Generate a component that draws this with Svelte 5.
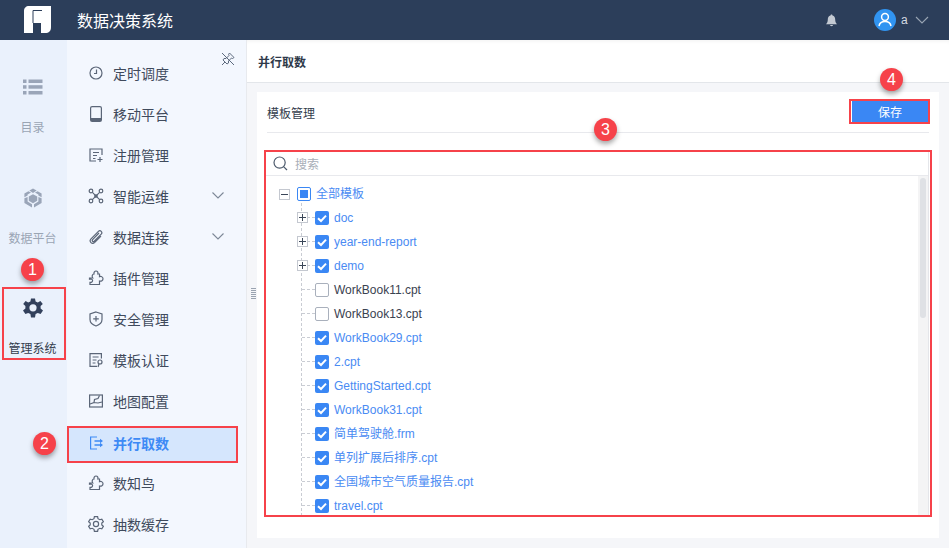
<script>
  const navItems = [
    { label: '定时调度', icon: 'clock' },
    { label: '移动平台', icon: 'tablet' },
    { label: '注册管理', icon: 'register' },
    { label: '智能运维', icon: 'network', arrow: true },
    { label: '数据连接', icon: 'clip', arrow: true },
    { label: '插件管理', icon: 'puzzle' },
    { label: '安全管理', icon: 'shield' },
    { label: '模板认证', icon: 'cert' },
    { label: '地图配置', icon: 'map' },
    { label: '并行取数', icon: 'parallel', active: true },
    { label: '数知鸟', icon: 'puzzle' },
    { label: '抽数缓存', icon: 'cog' }
  ]

  const tree = [
    { name: 'doc', checked: true, folder: true },
    { name: 'year-end-report', checked: true, folder: true },
    { name: 'demo', checked: true, folder: true },
    { name: 'WorkBook11.cpt', checked: false },
    { name: 'WorkBook13.cpt', checked: false },
    { name: 'WorkBook29.cpt', checked: true },
    { name: '2.cpt', checked: true },
    { name: 'GettingStarted.cpt', checked: true },
    { name: 'WorkBook31.cpt', checked: true },
    { name: '简单驾驶舱.frm', checked: true },
    { name: '单列扩展后排序.cpt', checked: true },
    { name: '全国城市空气质量报告.cpt', checked: true },
    { name: 'travel.cpt', checked: true }
  ]

  const badges = [
    { n: 1, cls: 'b1' },
    { n: 2, cls: 'b2' },
    { n: 3, cls: 'b3' },
    { n: 4, cls: 'b4' }
  ]
</script>

{#snippet navIcon(name)}
  <svg class="nav-icon" width="16" height="16" viewBox="0 0 16 16" fill="none" stroke="currentColor" stroke-width="1.2">
    {#if name === 'clock'}
      <circle cx="8" cy="8" r="6" />
      <path d="M8.5 4.5V8.5H6" />
    {:else if name === 'tablet'}
      <rect x="2.6" y="0.6" width="10.8" height="14.8" rx="1.5" />
      <path d="M3 12H13V15H3Z" fill="currentColor" stroke="none" />
    {:else if name === 'register'}
      <path d="M14 8V2H2V14H8" />
      <path d="M5 5.5H11M5 8.5H9M5 11.5H7.5M12 10V15M9.5 12.5H14.5" />
    {:else if name === 'network'}
      <circle cx="3" cy="3" r="1.8" />
      <circle cx="13" cy="3" r="1.8" />
      <circle cx="3" cy="13" r="1.8" />
      <circle cx="13" cy="13" r="1.8" />
      <path d="M4.4 4.4L11.6 11.6M11.6 4.4L4.4 11.6" />
      <circle cx="8" cy="8" r="1.2" fill="currentColor" />
    {:else if name === 'clip'}
      <path d="M11 4L4.6 10.6C3.6 11.8 5 13.2 6.2 12.2L13.2 5.2C15 3.2 12.4 0.6 10.4 2.4L3 9.8C0.6 12.4 4 16 6.8 13.4L13 7.2" />
    {:else if name === 'puzzle'}
      <path d="M1.5 8H4.8C3.6 6.4 4.2 4.2 6 4C5.6 2.4 6.8 1 8 1C9.4 1 10.4 2.4 9.8 4H11.5V6.6C13.4 6 15 7.2 15 8.8C15 10.4 13.4 11.6 11.5 11V14.5H2V12.4C3.6 12.6 4.6 11.6 4.6 10.6C4.6 9.4 3.2 8.8 1.5 9.2Z" />
    {:else if name === 'shield'}
      <path d="M8 1L14 3V8.5C14 11.5 11 14 8 15C5 14 2 11.5 2 8.5V3Z" />
      <path d="M8 5V10.5M5.2 7.8H10.8" />
    {:else if name === 'cert'}
      <path d="M9 14.4H2V1.6H13.4V6.5" />
      <path d="M4.6 5H10.6M4.6 8H8.5M4.6 11H7.5" />
      <circle cx="12" cy="10" r="2" />
      <path d="M11 12L10 15" />
    {:else if name === 'map'}
      <rect x="1.6" y="2" width="12.8" height="12" />
      <path d="M2 11L6 9.5L6.5 6.5L10 5.5L11.5 2.5M6 9.5L10 10L14 9" />
    {:else if name === 'parallel'}
      <path d="M9 2H2.6V14H9" />
      <path d="M6.5 6H12.5M6.5 10H12.5" stroke-width="1.6" />
      <path d="M12 3.8L15 6L12 8.2ZM12 7.8L15 10L12 12.2Z" fill="currentColor" stroke="none" />
    {:else if name === 'cog'}
      <path d="M6.4 1.2H9.6L10 3.2L11.8 4.2L13.8 3.6L15.4 6.2L13.8 7.6V9.4L15.4 10.8L13.8 13.4L11.8 12.8L10 13.8L9.6 15.8H6.4L6 13.8L4.2 12.8L2.2 13.4L0.6 10.8L2.2 9.4V7.6L0.6 6.2L2.2 3.6L4.2 4.2L6 3.2Z" transform="translate(0 -0.5)" />
      <circle cx="8" cy="8" r="2.6" />
    {/if}
  </svg>
{/snippet}

{#snippet checkbox(checked)}
  <span class="box" class:on={checked}>
    {#if checked}
      <svg width="14" height="14" viewBox="0 0 14 14" fill="none" stroke="#fff" stroke-width="2">
        <path d="M3 7.2L6 10L11 4.6" />
      </svg>
    {/if}
  </span>
{/snippet}

<div class="page">
  <header class="topbar">
    <svg class="logo" width="28" height="28" viewBox="0 0 28 28">
      <path d="M6 0H28V21C28 25 26 27 22 27H18V17H10V27H1V5C1 2 3 0 6 0Z" fill="#fff" />
      <path d="M10 17V4.5H19" fill="none" stroke="#2c3e5a" stroke-width="1" />
    </svg>
    <span class="brand">数据决策系统</span>
    <svg class="bell" width="13" height="13" viewBox="0 0 13 13">
      <path d="M6.5 0.5C7.2 0.5 7.5 1 7.5 1.5C9.5 2 10.2 3.6 10.2 5.5C10.2 7.8 10.8 9 12 10.2H1C2.2 9 2.8 7.8 2.8 5.5C2.8 3.6 3.5 2 5.5 1.5C5.5 1 5.8 0.5 6.5 0.5ZM5 11H8C7.8 12.6 5.2 12.6 5 11Z" fill="#c3c9d2" />
    </svg>
    <span class="avatar">
      <svg width="22" height="22" viewBox="0 0 22 22" fill="none" stroke="#fff" stroke-width="1.5">
        <circle cx="11" cy="8" r="3.4" />
        <path d="M5 17C5.6 13.8 8 12.6 11 12.6C14 12.6 16.4 13.8 17 17" />
      </svg>
    </span>
    <span class="user">a</span>
    <svg class="user-arrow" width="14" height="8" viewBox="0 0 14 8" fill="none" stroke="#9aa5b4" stroke-width="1.1">
      <path d="M1 1L7 7L13 1" />
    </svg>
  </header>

  <div class="body">
    <aside class="rail">
      <div class="rail-item list">
        <svg width="20" height="16" viewBox="0 0 20 16" fill="#9aa5b8">
          <rect x="0" y="0.5" width="3.5" height="3.5" />
          <rect x="5.5" y="0.5" width="14" height="3.5" />
          <rect x="0" y="6.2" width="3.5" height="3.5" />
          <rect x="5.5" y="6.2" width="14" height="3.5" />
          <rect x="0" y="12" width="3.5" height="3.5" />
          <rect x="5.5" y="12" width="14" height="3.5" />
        </svg>
        <span>目录</span>
      </div>
      <div class="rail-item data">
        <svg width="20" height="20" viewBox="0 0 20 20" fill="#9aa5b8">
          <path d="M10 6.2L14.2 8.4V12.8L10 15.2L5.8 12.8V8.4Z" />
          <path d="M10 0.5L13.6 2.6L10 5L6.4 2.6Z" />
          <path d="M14.6 3.2L18.6 5.5V9.2L15.4 7.6V6.6L12 4.6Z" />
          <path d="M5.4 3.2L1.4 5.5V9.2L4.6 7.6V6.6L8 4.6Z" />
          <path d="M1.4 10.2L4.6 8.9V13.6L9 16.2V19.4L1.4 15Z" />
          <path d="M18.6 10.2L15.4 8.9V13.6L11 16.2V19.4L18.6 15Z" />
        </svg>
        <span>数据平台</span>
      </div>
      <div class="rail-item manage">
        <svg width="20" height="20" viewBox="0 0 20 20">
          <path d="M8 0H12L12.6 3L14.8 4L17.4 2.4L19.8 5.6L17.6 7.6V9.9L20 12L17.6 15.6L14.8 14.4L12.6 15.6L12 19H8L7.4 15.6L5.2 14.4L2.4 15.6L0 12L2.4 9.9V7.6L0.2 5.6L2.6 2.4L5.2 4L7.4 3Z" fill="#33415c" transform="translate(0 0.5)" />
          <circle cx="10" cy="9.8" r="3.6" fill="#eaf1fc" />
        </svg>
        <span>管理系统</span>
      </div>
    </aside>

    <nav class="side">
      <svg class="pin" width="14" height="14" viewBox="0 0 14 14" fill="none" stroke="#5d6a7e" stroke-width="1">
        <path d="M8.5 1L13 5.5L11.5 6.5L10.5 6L7.5 9L7.5 11L6 12L2 8L3 6.5L5 6.5L8 3.5L7.6 2.4Z" />
        <path d="M1 13L4 10M1 1L13 13" />
      </svg>
      <ul class="menu">
        {#each navItems as item}
          <li class="menu-item" class:active={item.active}>
            {@render navIcon(item.icon)}
            <span>{item.label}</span>
            {#if item.arrow}
              <svg class="menu-arrow" width="12" height="7" viewBox="0 0 12 7" fill="none" stroke="#7c8797" stroke-width="1.1">
                <path d="M0.5 0.5L6 6L11.5 0.5" />
              </svg>
            {/if}
          </li>
        {/each}
      </ul>
    </nav>

    <div class="splitter">
      <span class="grip"></span>
    </div>

    <main class="main">
      <div class="title">并行取数</div>
      <div class="content">
        <section class="card">
          <div class="card-head">
            <span>模板管理</span>
            <button class="save">保存</button>
          </div>
          <div class="picker">
            <div class="search">
              <svg width="15" height="15" viewBox="0 0 15 15" fill="none" stroke="#4d5a6c" stroke-width="1.2">
                <circle cx="6.6" cy="6.6" r="5.6" />
                <path d="M10.8 10.8L14 14" />
              </svg>
              <span>搜索</span>
            </div>
            <div class="tree-wrap">
              <div class="tree">
                <div class="row root">
                  <span class="toggle"><i class="h"></i></span>
                  <span class="box half"><i></i></span>
                  <span class="name blue">全部模板</span>
                </div>
                <div class="children">
                  {#each tree as node}
                    <div class="row child">
                      <span class="twig"></span>
                      {#if node.folder}
                        <span class="toggle"><i class="h"></i><i class="v"></i></span>
                      {/if}
                      {@render checkbox(node.checked)}
                      <span class="name" class:blue={node.checked}>{node.name}</span>
                    </div>
                  {/each}
                </div>
              </div>
              <div class="scroll"><span class="thumb"></span></div>
            </div>
          </div>
        </section>
      </div>
    </main>
  </div>

  <!-- 标注框和序号 -->
  <span class="mark m1"></span>
  <span class="mark m2"></span>
  <span class="mark m3"></span>
  <span class="mark m4"></span>
  {#each badges as b}
    <span class="badge {b.cls}">{b.n}</span>
  {/each}
</div>

<style>
  :global(body) {
    margin: 0;
  }

  .page {
    position: relative;
    width: 949px;
    height: 548px;
    overflow: hidden;
    font-family: "Liberation Sans", "Noto Sans CJK SC", sans-serif;
    font-size: 12px;
    color: #333d4d;
    background: #f5f6f9;
  }

  .topbar {
    display: flex;
    align-items: center;
    height: 40px;
    background: #2c3e5a;
    color: #fff;
  }

  .logo {
    margin: 0 0 0 23px;
  }

  .brand {
    margin-left: 26px;
    font-size: 16px;
  }

  .bell {
    margin-left: 652px;
  }

  .avatar {
    display: flex;
    width: 22px;
    height: 22px;
    margin-left: 36px;
    border-radius: 50%;
    background: #3194f1;
  }

  .user {
    margin-left: 5px;
    color: #d5dae1;
  }

  .user-arrow {
    margin-left: 7px;
  }

  .body {
    display: flex;
    height: 508px;
  }

  .rail {
    display: flex;
    flex-direction: column;
    flex: none;
    width: 67px;
    background: #eaf1fc;
  }

  .rail-item {
    display: flex;
    flex-direction: column;
    align-items: center;
    padding-right: 2px;
    color: #9aa5b4;
  }

  .rail-item.list {
    padding-top: 39px;
    gap: 23px;
  }

  .rail-item.data {
    margin-top: 53px;
    gap: 21px;
  }

  .rail-item.manage {
    margin-top: 52px;
    gap: 21px;
    color: #333d4d;
  }

  .side {
    position: relative;
    flex: none;
    width: 179px;
    overflow: hidden;
    background: #f3f7fe;
  }

  .pin {
    position: absolute;
    top: 12px;
    right: 11px;
  }

  .menu {
    margin: 12px 0 0;
    padding: 0;
    list-style: none;
  }

  .menu-item {
    display: flex;
    align-items: center;
    height: 41px;
    padding: 0 22px 0 21px;
    font-size: 14px;
    color: #3f4a5c;
  }

  .menu-item.active {
    box-sizing: border-box;
    height: 36px;
    margin: 5px 8px 0 0;
    padding-bottom: 2px;
    background: #d5e6fd;
    color: #3d8af5;
    font-weight: 700;
  }

  .nav-icon {
    flex: none;
    margin-right: 9px;
    color: #5b6678;
  }

  .menu-item.active .nav-icon {
    color: #3d8af5;
  }

  .menu-arrow {
    margin-left: auto;
  }

  .splitter {
    position: relative;
    flex: none;
    width: 11px;
    background: #f5f6f9;
    border-left: 1px solid #e8eaee;
    box-sizing: border-box;
  }

  .grip {
    position: absolute;
    top: 247px;
    left: 4px;
    width: 5px;
    height: 12px;
    background: repeating-linear-gradient(0deg, #9aa3b0 0 1px, transparent 1px 2px);
  }

  .main {
    flex: 1;
    min-width: 0;
    margin-left: -10px;
    display: flex;
    flex-direction: column;
  }

  .title {
    flex: none;
    height: 43px;
    line-height: 47px;
    padding-left: 11px;
    font-weight: 700;
    color: #2f3a4a;
    background: #fff;
    border-bottom: 1px solid #e3e6ea;
    box-sizing: border-box;
    box-shadow: inset 0 4px 4px -3px rgba(0, 0, 0, 0.06);
    position: relative;
  }

  .content {
    flex: 1;
    padding: 9px 10px 10px;
    min-height: 0;
  }

  .card {
    height: 100%;
    box-sizing: border-box;
    padding: 0 10px;
    background: #fff;
  }

  .card-head {
    display: flex;
    align-items: center;
    justify-content: space-between;
    height: 40px;
    border-bottom: 1px solid #e8e9ed;
  }

  .save {
    width: 76px;
    height: 21px;
    margin: 0 1px 1px 0;
    padding: 0;
    border: none;
    background: #3a87f4;
    color: #fff;
    font: inherit;
  }

  .picker {
    margin: 19px 0 0 -1px;
    height: 363px;
    overflow: hidden;
    border-right: 1px solid #e4e6ea;
  }

  .search {
    display: flex;
    align-items: center;
    gap: 7px;
    height: 23px;
    padding-left: 7px;
    color: #a8aeb8;
    border-bottom: 1px solid #e8e9ed;
  }

  .tree-wrap {
    position: relative;
    display: flex;
    height: 339px;
  }

  .tree {
    flex: 1;
    padding: 6px 0 0 13px;
  }

  .row {
    display: flex;
    align-items: center;
    height: 24px;
    line-height: 24px;
  }

  .toggle {
    position: relative;
    flex: none;
    width: 9px;
    height: 9px;
    border: 1px solid #c4c8d0;
    background: #fff;
  }

  .toggle i {
    position: absolute;
    background: #3a4658;
  }

  .toggle .h {
    left: 1px;
    top: 4px;
    width: 7px;
    height: 1px;
  }

  .toggle .v {
    left: 4px;
    top: 1px;
    width: 1px;
    height: 7px;
  }

  .box {
    display: block;
    flex: none;
    position: relative;
    width: 14px;
    height: 14px;
    border-radius: 2px;
    box-sizing: border-box;
    border: 1px solid #a9b0bc;
    background: #fff;
  }

  .box.on {
    border: none;
    background: #3a87f4;
  }

  .box svg {
    display: block;
  }

  .box.half {
    border-color: #3a87f4;
  }

  .box.half i {
    position: absolute;
    left: 2px;
    top: 2px;
    width: 8px;
    height: 8px;
    background: #3a87f4;
  }

  .root .box {
    margin-left: 7px;
  }

  .name {
    margin-left: 5px;
    white-space: nowrap;
    color: #3a4250;
  }

  .name.blue {
    color: #4a8bf3;
  }

  .children {
    margin: -3px 0 0 22px;
    padding-top: 3px;
    height: 330px;
    border-left: 1px dashed #c9ccd3;
  }

  .child {
    position: relative;
    padding-left: 13px;
  }

  .twig {
    position: absolute;
    left: 0;
    top: 11px;
    width: 13px;
    border-top: 1px dashed #c9ccd3;
  }

  .child .toggle {
    position: absolute;
    left: -5px;
    top: 6px;
  }

  .scroll {
    flex: none;
    width: 10px;
    background: #f4f4f5;
    position: relative;
  }

  .thumb {
    position: absolute;
    left: 2px;
    top: 2px;
    width: 6px;
    height: 140px;
    border-radius: 3px;
    background: #dfe1e5;
  }

  .mark {
    position: absolute;
    box-sizing: border-box;
    border: 2px solid #f6424a;
  }

  .m1 {
    left: 2px;
    top: 287px;
    width: 64px;
    height: 73px;
  }

  .m2 {
    left: 67px;
    top: 426px;
    width: 171px;
    height: 37px;
  }

  .m3 {
    left: 264px;
    top: 150px;
    width: 668px;
    height: 367px;
  }

  .m4 {
    left: 849px;
    top: 99px;
    width: 81px;
    height: 25px;
  }

  .badge {
    position: absolute;
    width: 23px;
    height: 23px;
    border-radius: 50%;
    background: #f6424a;
    color: #fff;
    font-size: 16px;
    line-height: 23px;
    text-align: center;
    box-shadow: 0 3px 5px rgba(0, 0, 0, 0.35);
  }

  .b1 {
    left: 21px;
    top: 258px;
  }

  .b2 {
    left: 33px;
    top: 432px;
  }

  .b3 {
    left: 594px;
    top: 118px;
  }

  .b4 {
    left: 880px;
    top: 68px;
  }
</style>
